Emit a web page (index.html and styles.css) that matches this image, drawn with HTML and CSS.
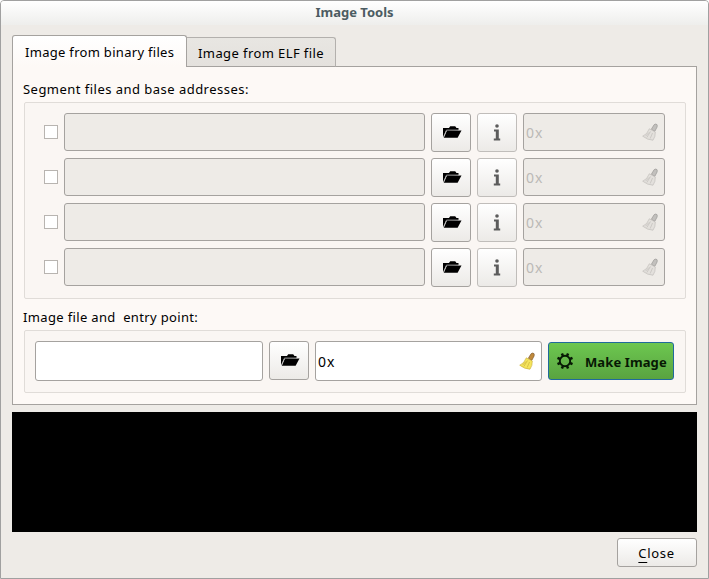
FILE: index.html
```html
<!DOCTYPE html>
<html lang="en">
<head>
<meta charset="utf-8">
<title>Image Tools</title>
<link rel="stylesheet" href="styles.css">
</head>
<body>
<svg class="defs" aria-hidden="true">
  <symbol id="folder" viewBox="0 0 20 14">
    <path d="M1 12.500V3h6l1.200-1.800h5L14.500 3H16.500v2.500L4 6z"/>
    <path d="M1.800 12.800 5 5.500h14.500L15.600 12.800z"/>
    <path d="M1.600 11.800 4.500 5.100H17.500" fill="none" stroke="#bbb" stroke-width=".8"/>
  </symbol>
  <symbol id="info" viewBox="0 0 8 17">
    <circle cx="4" cy="2" r="1.800"/>
    <path d="M1 5.500h4.800v9H7.200v2H.8v-2h2v-7H1z"/>
  </symbol>
  <symbol id="broom" viewBox="0 0 16 18">
    <path class="handle" d="M9.300 6.300 12 1.800Q13.500.4 15 1.600q.6 1.200 0 2.600L12.800 8.400z"/>
    <path class="brush" d="M7.300 5.800 13.300 9q.3 4.500-2.300 8.200-5.500-.2-10.300-4 4.500-1.700 6.600-7.400z"/>
    <path class="straw" d="m8.500 8.500-3.700 6M10.500 10l-2.300 5.500M7 9.500l-3.500 3.700"/>
  </symbol>
  <symbol id="gear" viewBox="0 0 18 18">
    <circle cx="9" cy="9" r="5.200" fill="none" stroke="#071804" stroke-width="1.900"/>
    <path fill="none" stroke="#071804" stroke-width="2.500" d="M7 4.100 5.900 1.500M11 4.100l1.100-2.600M7 13.900l-1.100 2.600M11 13.900l1.100 2.600M4.100 7 1.500 5.900M4.100 11l-2.600 1.100M13.900 7l2.600-1.100M13.900 11l2.600 1.100"/>
  </symbol>
</svg>
<div class="window">
  <header class="titlebar"><span>Image Tools</span></header>
  <nav class="tabs">
    <div class="tab active"><span>Image from binary files</span></div>
    <div class="tab"><span>Image from ELF file</span></div>
  </nav>
  <main class="pane">
    <div class="label segments"><span>Segment files and base addresses:</span></div>
    <section class="group rows">
      <div class="row">
        <i class="check"></i><div class="field off"></div>
        <div class="btn"><svg class="folder"><use href="#folder"/></svg></div>
        <div class="btn dim"><svg class="info"><use href="#info"/></svg></div>
        <div class="field off hex"><span>0x</span><svg class="broom"><use href="#broom"/></svg></div>
      </div>
      <div class="row">
        <i class="check"></i><div class="field off"></div>
        <div class="btn"><svg class="folder"><use href="#folder"/></svg></div>
        <div class="btn dim"><svg class="info"><use href="#info"/></svg></div>
        <div class="field off hex"><span>0x</span><svg class="broom"><use href="#broom"/></svg></div>
      </div>
      <div class="row">
        <i class="check"></i><div class="field off"></div>
        <div class="btn"><svg class="folder"><use href="#folder"/></svg></div>
        <div class="btn dim"><svg class="info"><use href="#info"/></svg></div>
        <div class="field off hex"><span>0x</span><svg class="broom"><use href="#broom"/></svg></div>
      </div>
      <div class="row">
        <i class="check"></i><div class="field off"></div>
        <div class="btn"><svg class="folder"><use href="#folder"/></svg></div>
        <div class="btn dim"><svg class="info"><use href="#info"/></svg></div>
        <div class="field off hex"><span>0x</span><svg class="broom"><use href="#broom"/></svg></div>
      </div>
    </section>
    <div class="label entry"><span>Image file and&nbsp; entry point:</span></div>
    <section class="group output">
      <div class="field"></div>
      <div class="btn"><svg class="folder"><use href="#folder"/></svg></div>
      <div class="field hex"><span>0x</span><svg class="broom"><use href="#broom"/></svg></div>
      <div class="make"><svg class="gear"><use href="#gear"/></svg><span>Make Image</span></div>
    </section>
  </main>
  <div class="console"></div>
  <footer class="actions"><div class="btn close"><span><u>C</u>lose</span></div></footer>
</div>
</body>
</html>
```
FILE: styles.css
```css
* { box-sizing: border-box; }
body {
  margin: 0;
  background: #fff;
  font: 13px/18px "Noto Sans", "Open Sans", sans-serif;
  color: #000;
}
.defs { position: absolute; width: 0; height: 0; }
.window {
  width: 709px;
  height: 579px;
  border: 1px solid #a0a0a0;
  border-radius: 4px 4px 0 0;
  background: #eeebe7;
  padding: 0 11px;
  overflow: hidden;
}
.titlebar {
  height: 24px;
  margin: 0 -11px;
  background: linear-gradient(#fff, #eeeeec);
  text-align: center;
  line-height: 23px;
  font-weight: 700;
  color: #4c5c62;
}
.tabs {
  display: flex;
  align-items: flex-end;
  height: 42px;
  margin-bottom: -1px;
  position: relative;
}
.tab {
  height: 30px;
  width: 149px;
  border: 1px solid #b3b0ad;
  border-left: 0;
  border-bottom-color: #a5a29f;
  border-radius: 0 3px 0 0;
  background: linear-gradient(#e8e6e2, #e4e1dd);
  padding: 6px 0 0 11px;
  white-space: nowrap;
  letter-spacing: .41px;
}
.tab.active {
  width: 175px;
  height: 32px;
  border: 1px solid #a5a29f;
  border-bottom: 0;
  border-radius: 3px 3px 0 0;
  background: linear-gradient(#fff, #fdf9f6);
  padding: 7px 0 0 12px;
  letter-spacing: .3px;
}
.pane {
  height: 339px;
  border: 1px solid #a5a29f;
  background: #fdf9f6;
  padding: 0 10px 0 11px;
}
.label { white-space: nowrap; }
.label span { margin-left: -1px; }
.segments { height: 35px; padding-top: 13px; letter-spacing: .47px; }
.entry { height: 31px; padding-top: 9px; letter-spacing: .35px; }
.group {
  border: 1px solid #e0dcd8;
  border-radius: 2px;
  background: #faf6f3;
}
.rows {
  height: 197px;
  padding: 10px 20px 0 19px;
  display: grid;
  grid-auto-rows: 39px;
  gap: 6px;
  align-content: start;
}
.row {
  display: grid;
  grid-template-columns: 14px 361px 40px 40px 142px;
  column-gap: 6px;
  align-items: start;
}
.check {
  width: 14px;
  height: 14px;
  margin-top: 12px;
  border: 1px solid #b8b4b0;
  background: #fff;
}
.field {
  --handle: #c08a3c;
  --handle-edge: #75502a;
  --brush: #f5e45c;
  --brush-edge: #c4ab35;
  height: 40px;
  border: 1px solid #a5a29f;
  border-radius: 3px;
  background: #fff;
}
.field.off {
  --handle: #c2c0bd;
  --handle-edge: #92908e;
  --brush: #e3e0dc;
  --brush-edge: #bcb9b6;
  height: 38px;
  background: #eeebe7;
  color: #bbb9b6;
}
.hex {
  display: flex;
  align-items: center;
  justify-content: space-between;
  padding: 0 6px 0 2px;
  font-size: 14px;
  letter-spacing: .9px;
}
.hex span { padding-top: 1px; }
.btn {
  height: 39px;
  border: 1px solid #a5a29f;
  border-radius: 3px;
  background: linear-gradient(#fff, #eceae7);
  display: flex;
  align-items: center;
  justify-content: center;
}
.dim { border-color: #c0bdba; }
.folder { width: 20px; height: 14px; margin: -2px 0 0 2px; }
.info { width: 8px; height: 17px; fill: #5c5c5c; }
.broom { width: 16px; height: 18px; }
.handle { fill: var(--handle); stroke: var(--handle-edge); stroke-width: .6; }
.brush { fill: var(--brush); stroke: var(--brush-edge); stroke-width: .6; }
.straw { fill: none; stroke: var(--brush-edge); stroke-width: .6; }
.output {
  height: 63px;
  padding: 10px 11px 0 10px;
  display: grid;
  grid-template-columns: 228px 40px 227px 126px;
  column-gap: 6px;
  align-items: start;
}
.make {
  height: 38px;
  margin-top: 1px;
  border: 1px solid #206a9c;
  border-radius: 3px;
  background: linear-gradient(#6dc750, #59a340);
  display: flex;
  align-items: center;
  gap: 11px;
  padding-left: 7px;
  font-weight: 700;
  letter-spacing: .1px;
  white-space: nowrap;
  color: #071804;
}
.make span { padding-top: 1px; }
.gear { width: 18px; height: 18px; flex: none; }
.console { height: 120px; margin-top: 7px; background: #000; }
.actions { display: flex; justify-content: flex-end; padding-top: 6px; }
.close { width: 80px; height: 29px; padding-left: 1px; letter-spacing: .65px; }
.close span { margin-left: -2px; }
.close u { text-underline-offset: 4px; }
```
